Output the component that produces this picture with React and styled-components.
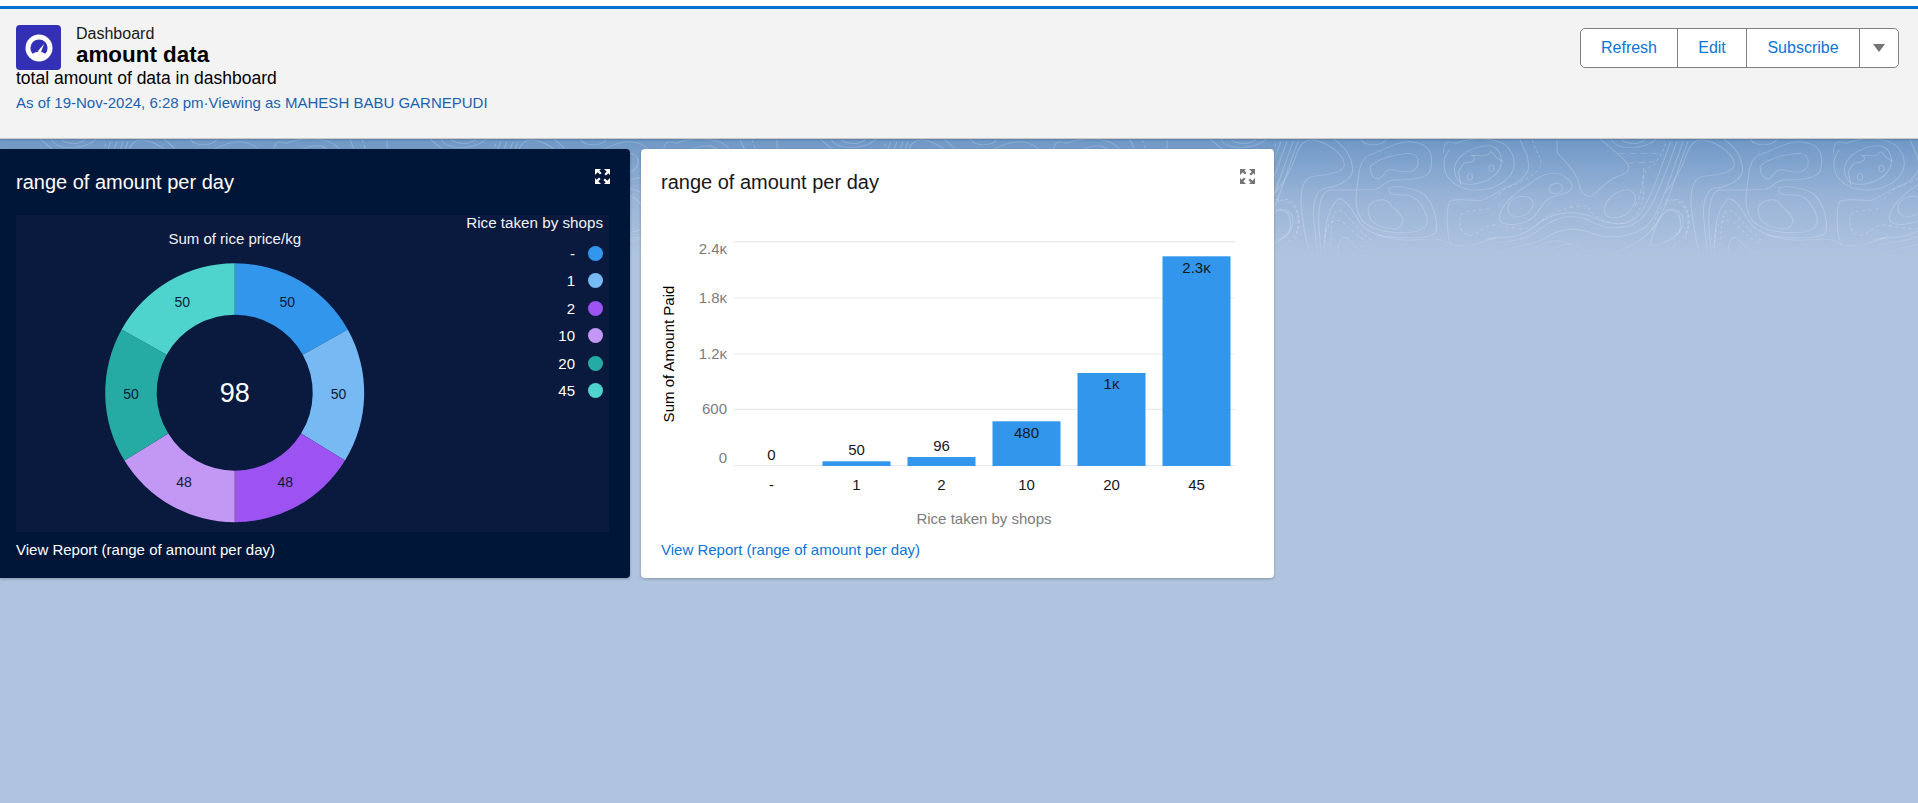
import React from 'react';
import styled, { createGlobalStyle } from 'styled-components';

const topoPaths = `
<path d="M12,190 C50,130 60,90 65,70 C75,40 85,28 105,30 C150,40 180,80 180,105 C178,130 130,135 100,140 C80,150 75,175 75,220 C78,270 85,320 95,370"/>
<path d="M155,28 C180,50 198,75 200,120 C198,150 165,170 130,175 C110,185 105,215 105,250 C108,300 112,340 115,370"/>
<path d="M210,180 L145,180 C125,185 118,215 118,280 C120,320 122,350 125,370"/>
<path d="M132,370 C132,300 135,240 165,207 C190,205 205,260 225,290 C250,315 300,335 350,330 C400,325 420,325 440,345"/>
<path d="M165,375 C165,320 180,310 195,335 C210,360 225,365 240,368"/>
<path d="M242,110 C260,85 310,70 340,70 C365,75 365,115 340,125 C310,130 295,110 280,125 C270,145 258,160 245,130 Z"/>
<path d="M210,180 C215,130 215,90 240,75 C280,60 300,35 340,35 C385,40 395,70 390,110 C390,145 350,150 300,150 C280,150 270,175 255,178 Z"/>
<path d="M220,28 C225,50 275,50 282,28"/>
<path d="M288,175 C285,195 300,195 330,195 C360,200 370,230 380,260 C385,290 370,305 330,308 C290,310 250,300 225,275 C210,250 205,215 210,182"/>
<path d="M288,175 C295,165 340,170 370,190 C395,215 410,280 400,310 C380,330 300,325 260,315"/>
<path d="M237,240 C240,210 275,200 290,220 C300,240 320,250 322,270 C320,295 305,300 290,295 C260,290 240,280 237,240 Z"/>
<path d="M12,335 C40,320 60,295 55,260 C45,235 30,235 12,240"/>
<path d="M12,210 C40,205 60,220 70,260 C75,300 60,320 25,360" stroke-dasharray="9 7"/>
<path d="M145,345 C150,280 150,245 165,240 C185,240 200,290 245,330" stroke-dasharray="9 7"/>
<path d="M130,355 C135,290 140,270 172,272 C190,285 205,320 250,345" stroke-dasharray="9 7"/>
<path d="M420,70 C420,35 430,30 450,40 C490,20 540,22 570,45 C600,80 600,130 560,160 C520,190 450,190 425,130 C418,100 420,80 435,60"/>
<path d="M447,110 C455,70 500,45 535,48 C565,60 570,110 540,140 C510,165 470,172 455,150 C447,135 445,125 447,110 Z"/>
<path d="M462,165 L456,125 L470,98 C490,100 505,85 488,76 C510,75 525,85 535,65 L550,85 L565,95"/>
<ellipse cx="484" cy="140" rx="6" ry="10"/><ellipse cx="536" cy="115" rx="6" ry="10"/>
<path d="M605,28 C615,60 630,85 625,120 C610,160 580,165 560,180 C540,195 525,205 510,212 C480,210 445,205 435,215 C425,240 428,330 440,345 C490,352 520,335 550,320"/>
<path d="M635,30 C640,60 660,80 655,110 C640,140 600,160 570,175 C560,185 550,195 540,210" stroke-dasharray="9 7"/>
<path d="M555,265 C555,230 590,190 630,160 C660,130 700,110 730,160 C740,195 690,190 670,210 C650,230 650,260 620,275 C590,290 555,285 555,265 Z"/>
<path d="M577,225 C585,195 630,190 637,215 C640,245 610,265 590,260 C575,250 575,240 577,225 Z"/>
<ellipse cx="692" cy="175" rx="17" ry="15" transform="rotate(-25 692 175)"/>
<path d="M530,235 C500,245 470,235 460,260 C455,290 470,325 490,315 C515,300 520,285 545,285 C580,290 620,310 650,280 C680,240 750,220 770,230 C780,260 810,280 850,280 C880,275 900,240 905,190 C900,150 905,110 930,105 C940,85 950,70 958,40" stroke-dasharray="9 7"/>
<path d="M525,345 C570,330 610,340 650,300 C690,260 730,250 770,270 C810,300 860,300 890,275 C920,250 940,190 985,35"/>
<path d="M540,372 C590,345 630,350 670,322 C700,295 740,290 780,310 C820,330 880,320 910,290 C940,260 960,170 1000,35"/>
<path d="M520,328 C560,320 600,330 640,290 C680,245 730,240 775,258 C815,285 860,290 885,265 C910,240 930,170 970,35"/>
<path d="M695,30 L695,65 C700,85 730,100 745,150 C752,190 760,198 775,200 C795,190 810,150 850,135 C880,120 870,105 850,80 L800,28"/>
<path d="M810,240 C810,210 840,175 870,180 C895,195 885,230 860,255 C830,270 810,265 810,240 Z"/>
<path d="M825,28 C840,60 900,62 935,28"/><path d="M850,30 C870,45 890,45 910,28"/>
<path d="M845,70 L945,70" stroke-dasharray="16 10"/><path d="M865,100 L930,95" stroke-dasharray="16 10"/>
<path d="M905,115 C900,150 905,190 880,235" stroke-dasharray="12 9"/>
<path d="M920,345 C925,310 945,240 970,240 C1000,245 995,290 990,310 C970,335 940,350 920,345 Z"/>
<path d="M925,300 C935,250 950,210 985,208 C1010,215 1020,260 1005,330" stroke-dasharray="9 7"/>
<path d="M830,375 C860,350 900,340 930,290 C960,240 985,120 1012,35"/>
<path d="M730,345 C700,325 670,330 640,355 M770,368 C740,335 700,335 680,368" />
`;

const topoSvg = `<svg xmlns="http://www.w3.org/2000/svg" width="390" height="125" viewBox="0 27 944 375" preserveAspectRatio="none"><defs><linearGradient id="f" gradientUnits="userSpaceOnUse" x1="0" y1="27" x2="0" y2="385"><stop offset="0" stop-color="#fff" stop-opacity=".2"/><stop offset=".8" stop-color="#fff" stop-opacity=".2"/><stop offset="1" stop-color="#fff" stop-opacity="0"/></linearGradient><g id="p">${topoPaths}</g></defs><g fill="none" stroke="url(#f)" stroke-width="2.6"><use href="#p"/><use href="#p" x="-944"/></g></svg>`;
const topoUrl = `data:image/svg+xml,${encodeURIComponent(topoSvg)}`;

const GlobalStyle = createGlobalStyle`
  html, body { margin: 0; padding: 0; background: #fff; }
  body { font-family: "Liberation Sans", Arial, sans-serif; overflow: hidden; }
  * { box-sizing: border-box; }
`;

const Page = styled.div`
  width: 1918px;
  height: 803px;
  padding-top: 6px;
  display: flex;
  flex-direction: column;
  overflow: hidden;
  background: #fff;
`;

const Header = styled.header`
  position: relative;
  z-index: 1;
  height: 133px;
  flex: none;
  display: flex;
  justify-content: space-between;
  align-items: flex-start;
  padding: 16px 19px 0 16px;
  background: #f3f3f3;
  border-top: 3px solid #0070d2;
  border-bottom: 1px solid #c9c9c9;
  box-shadow: 0 1px 2px rgba(0, 0, 0, 0.18);
`;

const Intro = styled.div`
  display: flex;
  flex-direction: column;
`;

const TitleRow = styled.div`
  display: flex;
  align-items: flex-start;
  gap: 15px;
`;

const AppIcon = styled.div`
  width: 45px;
  height: 45px;
  border-radius: 4px;
  background: #3430b6;
  display: flex;
  align-items: center;
  justify-content: center;
`;

const Titles = styled.div`
  display: flex;
  flex-direction: column;
  padding-top: 1px;
`;

const Eyebrow = styled.div`
  font-size: 16px;
  line-height: 16px;
  color: #181818;
`;

const PageTitle = styled.h1`
  margin: 0;
  font-size: 22.4px;
  line-height: 25px;
  font-weight: 700;
  color: #000;
`;

const Description = styled.div`
  font-size: 17.5px;
  line-height: 17px;
  color: #000;
`;

const Meta = styled.div`
  margin-top: 7px;
  font-size: 15px;
  line-height: 18px;
  color: #1b62ad;
`;

const ButtonGroup = styled.div`
  margin-top: 3px;
  display: flex;
  height: 40px;
  background: #fff;
  border: 1px solid #808080;
  border-radius: 5px;
  overflow: hidden;
`;

const GroupButton = styled.button`
  width: ${(p) => p.$w}px;
  padding: 0;
  border: 0;
  border-left: ${(p) => (p.$first ? '0' : '1px solid #808080')};
  background: transparent;
  color: #0a76d6;
  font: 16px/38px "Liberation Sans", Arial, sans-serif;
  display: flex;
  align-items: center;
  justify-content: center;
`;

const Caret = styled.span`
  width: 0;
  height: 0;
  border-left: 6.5px solid transparent;
  border-right: 6.5px solid transparent;
  border-top: 8px solid #747474;
`;

const Main = styled.main`
  flex: 1;
  display: flex;
  align-items: flex-start;
  gap: 11px;
  padding-top: 10px;
  background:
    url("${topoUrl}") 100px 0 / 390px 125px repeat-x,
    linear-gradient(#6f98c6 0, #9bb5d8 62px, #b0c4df 118px);
`;

const Card = styled.section`
  width: ${(p) => p.$w}px;
  height: 429px;
  display: flex;
  flex-direction: column;
  padding-left: ${(p) => p.$inset}px;
  background: ${(p) => (p.$dark ? '#001639' : '#fff')};
  color: ${(p) => (p.$dark ? '#fff' : '#181818')};
  border-radius: ${(p) => (p.$dark ? '0 4px 4px 0' : '4px')};
  box-shadow: 0 1px 3px rgba(0, 0, 0, 0.25);
`;

const CardHead = styled.div`
  height: 66px;
  flex: none;
  display: flex;
  align-items: flex-start;
  justify-content: space-between;
  padding: 20px ${(p) => p.$end}px 0 0;
`;

const CardTitle = styled.h2`
  margin: 0;
  font-size: 20px;
  line-height: 26px;
  font-weight: 400;
`;

const ChartPanel = styled.div`
  width: 593px;
  height: 317px;
  flex: none;
  display: flex;
  justify-content: space-between;
  align-items: flex-start;
  background: #091a3e;
`;

const Legend = styled.div`
  display: flex;
  flex-direction: column;
  align-items: flex-end;
  padding-right: 6px;
  color: #fff;
`;

const LegendTitle = styled.div`
  font-size: 15.2px;
  line-height: 16px;
  margin-bottom: 8.5px;
  color: #f2f2f2;
`;

const LegendRow = styled.div`
  height: 27.5px;
  display: flex;
  align-items: center;
  gap: 13px;
  font-size: 15px;
`;

const Dot = styled.span`
  width: 15px;
  height: 15px;
  border-radius: 50%;
  background: ${(p) => p.$c};
`;

const ReportLink = styled.a`
  display: block;
  font-size: 15px;
  line-height: 36px;
  color: ${(p) => (p.$dark ? '#fff' : '#0a76d6')};
`;

const ChartSvg = styled.svg`
  display: block;
  flex: none;
  font-family: "Liberation Sans", Arial, sans-serif;
`;

const slices = [
  { label: '-', v: 50, c: '#3296ed' },
  { label: '1', v: 50, c: '#77b9f2' },
  { label: '2', v: 48, c: '#9d53f2' },
  { label: '10', v: 48, c: '#c398f5' },
  { label: '20', v: 50, c: '#26aba4' },
  { label: '45', v: 50, c: '#4ed4cd' },
];

const bars = [
  { x: '-', v: '0', cx: 771.5, top: 466, ly: 455 },
  { x: '1', v: '50', cx: 856.5, top: 461.3, ly: 450 },
  { x: '2', v: '96', cx: 941.5, top: 457, ly: 446 },
  { x: '10', v: '480', cx: 1026.5, top: 421.3, ly: 433 },
  { x: '20', v: '1ĸ', cx: 1111.5, top: 373, ly: 384 },
  { x: '45', v: '2.3ĸ', cx: 1196.5, top: 256.3, ly: 268 },
];

const ticks = [
  { t: '2.4ĸ', y: 241.7, ly: 249 },
  { t: '1.8ĸ', y: 298, ly: 298 },
  { t: '1.2ĸ', y: 354, ly: 354 },
  { t: '600', y: 409.3, ly: 409 },
  { t: '0', y: 465.5, ly: 458 },
];

function Donut() {
  const cx = 234.7, cy = 392.7, R = 129.5, r = 78;
  const total = slices.reduce((s, d) => s + d.v, 0);
  let a = 0;
  const pt = (rad, ang) => [cx + rad * Math.sin(ang), cy - rad * Math.cos(ang)];
  const parts = slices.map((d) => {
    const a0 = a;
    const a1 = a + (d.v / total) * Math.PI * 2;
    a = a1;
    const [x0, y0] = pt(R, a0), [x1, y1] = pt(R, a1), [x2, y2] = pt(r, a1), [x3, y3] = pt(r, a0);
    const [lx, ly] = pt((R + r) / 2, (a0 + a1) / 2);
    return { ...d, lx, ly, path: `M${x0} ${y0}A${R} ${R} 0 0 1 ${x1} ${y1}L${x2} ${y2}A${r} ${r} 0 0 0 ${x3} ${y3}Z` };
  });
  return (
    <ChartSvg width="450" height="317" viewBox="16 215 450 317">
      <text x={cx} y="244" textAnchor="middle" fontSize="15" fill="#f2f2f2">Sum of rice price/kg</text>
      {parts.map((p) => <path key={p.label} d={p.path} fill={p.c} />)}
      {parts.map((p) => (
        <text key={p.label} x={p.lx} y={p.ly + 4} textAnchor="middle" fontSize="14" fill="#0b1a35">{p.v}</text>
      ))}
      <text x={cx} y={cy + 9} textAnchor="middle" fontSize="27" fill="#fff">98</text>
    </ChartSvg>
  );
}

function Bars() {
  return (
    <ChartSvg width="613" height="317" viewBox="661 215 613 317">
      {ticks.map((t) => (
        <g key={t.t}>
          <line x1="734" x2="1235" y1={t.y} y2={t.y} stroke="#e5ebf2" strokeWidth="1.2" />
          <text x="727" y={t.ly + 5} textAnchor="end" fontSize="15" fill="#7c7c7c">{t.t}</text>
        </g>
      ))}
      {bars.map((b) => (
        <g key={b.x}>
          <rect x={b.cx - 34} y={b.top} width="68" height={466 - b.top} fill="#3296ed" />
          <text x={b.cx} y={b.ly + 5} textAnchor="middle" fontSize="15" fill="#181818">{b.v}</text>
          <text x={b.cx} y="490" textAnchor="middle" fontSize="15" fill="#181818">{b.x}</text>
        </g>
      ))}
      <text x="984" y="524" textAnchor="middle" fontSize="15" fill="#7c7c7c">Rice taken by shops</text>
      <text transform="translate(674 354) rotate(-90)" textAnchor="middle" fontSize="15" fill="#000">Sum of Amount Paid</text>
    </ChartSvg>
  );
}

const ExpandIcon = ({ color }) => (
  <svg width="15" height="15" viewBox="0 0 15 15" fill={color} stroke="none" style={{ flex: 'none' }}>
    <path d="M0 0h6L4.3 1.7 6.6 4 5 5.6 2.7 3.3 1 5 0 6zM15 0v6l-1.7-1.7L11 6.6 9.4 5 11.7 2.7 10 1 9 0zM0 15V9l1.7 1.7L4 8.4 5.6 10l-2.3 2.3L5 14l1 1zM15 15H9l1.7-1.7L8.4 11 10 9.4l2.3 2.3L14 10l1-1z" />
  </svg>
);

const GaugeIcon = () => (
  <svg width="28" height="28" viewBox="0 0 28 28">
    <circle cx="14" cy="14" r="13.5" fill="#fff" />
    <path d="M7.6 19.8A8.6 8.6 0 1 1 20.4 19.8C18.5 18.3 16.4 18 14 18S9.5 18.3 7.6 19.8z" fill="#3430b6" />
    <path d="M19.2 9.8L15.8 18.6 12.6 17.6z" fill="#fff" />
  </svg>
);

export default function App() {
  return (
    <Page>
      <GlobalStyle />
      <Header>
        <Intro>
          <TitleRow>
            <AppIcon><GaugeIcon /></AppIcon>
            <Titles>
              <Eyebrow>Dashboard</Eyebrow>
              <PageTitle>amount data</PageTitle>
            </Titles>
          </TitleRow>
          <Description>total amount of data in dashboard</Description>
          <Meta>As of 19-Nov-2024, 6:28 pm·Viewing as MAHESH BABU GARNEPUDI</Meta>
        </Intro>
        <ButtonGroup>
          <GroupButton $first $w={96}>Refresh</GroupButton>
          <GroupButton $w={69}>Edit</GroupButton>
          <GroupButton $w={113}>Subscribe</GroupButton>
          <GroupButton $w={39}><Caret /></GroupButton>
        </ButtonGroup>
      </Header>
      <Main>
        <Card $dark $w={630} $inset={16}>
          <CardHead $end={20}>
            <CardTitle>range of amount per day</CardTitle>
            <ExpandIcon color="#fff" />
          </CardHead>
          <ChartPanel>
            <Donut />
            <Legend>
              <LegendTitle>Rice taken by shops</LegendTitle>
              {slices.map((s) => (
                <LegendRow key={s.label}>{s.label}<Dot $c={s.c} /></LegendRow>
              ))}
            </Legend>
          </ChartPanel>
          <ReportLink $dark>View Report (range of amount per day)</ReportLink>
        </Card>
        <Card $w={633} $inset={20}>
          <CardHead $end={19}>
            <CardTitle>range of amount per day</CardTitle>
            <ExpandIcon color="#747474" />
          </CardHead>
          <Bars />
          <ReportLink>View Report (range of amount per day)</ReportLink>
        </Card>
      </Main>
    </Page>
  );
}
